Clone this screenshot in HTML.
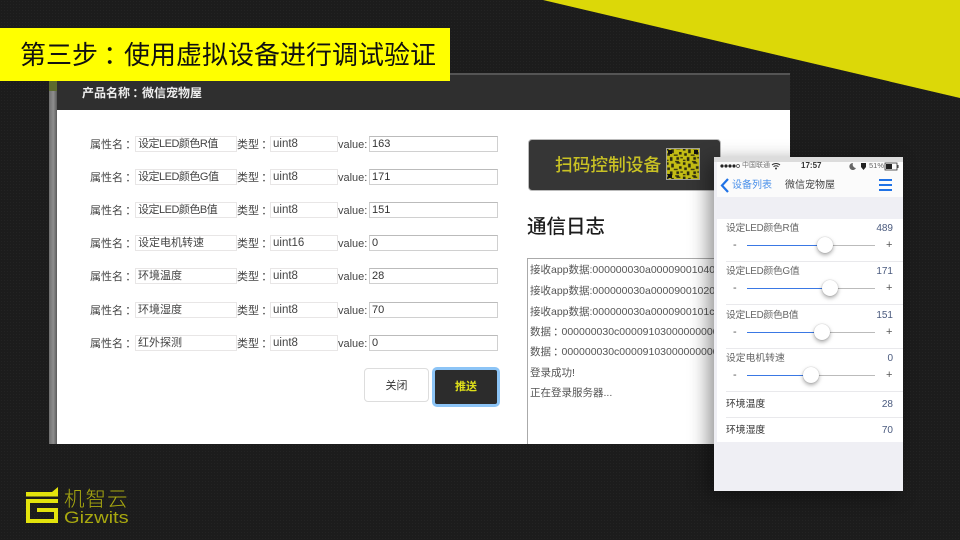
<!DOCTYPE html>
<html lang="zh">
<head>
<meta charset="utf-8">
<title>第三步&#xFF1A;使用虚拟设备进行调试验证</title>
<style>
html,body{margin:0;padding:0;}
body{width:960px;height:540px;overflow:hidden;position:relative;background:#1c1c1c;font-family:"Liberation Sans","Noto Sans CJK SC",sans-serif;}
.a{position:absolute;white-space:nowrap;}
.c{font-family:"Noto Sans CJK TC",sans-serif;line-height:1;position:relative;left:.2em;}
#bgtex{left:0;top:0;width:960px;height:540px;background-image:radial-gradient(#232323 0.6px,transparent 0.7px);background-size:3px 3px;}
#tri{left:0;top:0;}
#bar{left:0;top:28px;width:450px;height:53px;background:#ffff00;color:#111;font-size:26px;line-height:53px;z-index:5;}
#bar span.t{position:absolute;left:20px;top:1px;}
#edge{left:49px;top:81px;width:8px;height:363px;background:linear-gradient(90deg,#6f6f6f,#8e8e8e 55%,#5a5a5a);}
#moss{left:49px;top:81px;width:8px;height:10px;background:#5d6b2e;}
#head{left:57px;top:73px;width:733px;height:37px;background:#2f2f2f;border-top:2px solid #555;box-sizing:border-box;}
#title{left:82px;top:85px;font-size:12px;line-height:17px;font-weight:bold;color:#eee;}
#body{left:57px;top:110px;width:733px;height:334px;background:#fff;}
.l{font-size:11px;line-height:16px;color:#444;margin-top:1px;}
.i{box-sizing:border-box;height:16px;border:1px solid #e8e6e6;background:#fff;font-size:11px;line-height:15px;color:#444;padding-left:2px;}
.n{letter-spacing:-.5px;}
.u{font-size:11.5px;padding-left:2px;}
.v{border-color:#d0d0d0;border-top-color:#bbb;color:#333;font-size:11px;padding-left:2px;}
#close{left:364px;top:368px;width:65px;height:34px;box-sizing:border-box;border:1px solid #ddd;border-radius:4px;background:#fff;color:#333;font-size:11px;line-height:35px;text-align:center;}
#push{left:432px;top:367px;width:68px;height:40px;box-sizing:border-box;border:3px solid #8cc4f6;border-radius:5px;background:#2c2c2c;color:#dfe01a;font-size:11px;font-weight:bold;line-height:34px;text-align:center;}
#scan{left:528px;top:139px;width:193px;height:52px;box-sizing:border-box;border:1px solid #bbb;border-radius:4px;background:#363636;}
#scantxt{left:555px;top:152px;font-size:17.7px;line-height:26px;color:#c9c224;font-weight:500;}
#qr{left:666px;top:148px;}
#logt{left:527px;top:214px;font-size:19.5px;line-height:26px;color:#1c1c1c;font-weight:500;}
#logb{left:527px;top:258px;width:200px;height:186px;box-sizing:border-box;border-left:1px solid #aaa;border-top:1px solid #aaa;}
.g{left:530px;font-size:10.5px;line-height:16px;color:#555;}
#shadow{left:714px;top:157px;width:189px;height:334px;box-shadow:-6px 4px 18px rgba(0,0,0,.42);}
#ph{left:714px;top:157px;width:189px;height:334px;background:#efeff4;overflow:hidden;}
#ph .a{z-index:2;}
#top{left:0;top:0;width:189px;height:5px;background:#dcdcdc;}
#nav{left:3px;top:5px;width:186px;height:35px;background:#fbfbfb;}
#w1{left:3px;top:62px;width:186px;height:223px;background:#fff;}
.sep{left:12px;width:177px;height:1px;background:#e9e9ec;}
.pl{left:12px;font-size:9.8px;line-height:14px;color:#666;}
.pl.e{letter-spacing:-.25px;}
.pl.d{color:#333;}
.pv{right:10px;font-size:10px;line-height:14px;color:#4a5a7e;}
.mn,.ps{font-size:11px;line-height:12px;color:#555;}
.mn{left:19px;}.ps{left:172px;}
.tr{left:33px;width:128px;height:1px;background:#bbb;}
.fl{left:33px;height:1.4px;background:#3a78e4;}
.th{width:16px;height:16px;border-radius:50%;background:#fff;box-shadow:0 2px 4px rgba(0,0,0,.35),0 0 1px rgba(0,0,0,.3);}
</style>
</head>
<body>
<div class="a" id="bgtex"></div>
<svg class="a" id="tri" width="960" height="540" viewBox="0 0 960 540"><polygon points="543,0 960,98 960,0" fill="#dcd808"/></svg>

<div class="a" id="edge"></div>
<div class="a" id="moss"></div>
<div class="a" id="head"></div>
<div class="a" id="body"></div>
<div class="a" id="title">产品名称<span class="c">&#xFF1A;</span>微信宠物屋</div>
<div class="a" id="bar"><span class="t">第三步<span class="c">&#xFF1A;</span>使用虚拟设备进行调试验证</span></div>

<div class="a l" style="left:90px;top:136px">属性名<span class="c">&#xFF1A;</span></div><div class="a i n" style="left:135px;top:136px;width:102px">设定LED颜色R值</div><div class="a l" style="left:237px;top:136px">类型<span class="c">&#xFF1A;</span></div><div class="a i u" style="left:270px;top:136px;width:68px">uint8</div><div class="a l" style="left:338px;top:136px">value:</div><div class="a i v" style="left:369px;top:136px;width:129px">163</div>
<div class="a l" style="left:90px;top:169px">属性名<span class="c">&#xFF1A;</span></div><div class="a i n" style="left:135px;top:169px;width:102px">设定LED颜色G值</div><div class="a l" style="left:237px;top:169px">类型<span class="c">&#xFF1A;</span></div><div class="a i u" style="left:270px;top:169px;width:68px">uint8</div><div class="a l" style="left:338px;top:169px">value:</div><div class="a i v" style="left:369px;top:169px;width:129px">171</div>
<div class="a l" style="left:90px;top:202px">属性名<span class="c">&#xFF1A;</span></div><div class="a i n" style="left:135px;top:202px;width:102px">设定LED颜色B值</div><div class="a l" style="left:237px;top:202px">类型<span class="c">&#xFF1A;</span></div><div class="a i u" style="left:270px;top:202px;width:68px">uint8</div><div class="a l" style="left:338px;top:202px">value:</div><div class="a i v" style="left:369px;top:202px;width:129px">151</div>
<div class="a l" style="left:90px;top:235px">属性名<span class="c">&#xFF1A;</span></div><div class="a i" style="left:135px;top:235px;width:102px">设定电机转速</div><div class="a l" style="left:237px;top:235px">类型<span class="c">&#xFF1A;</span></div><div class="a i u" style="left:270px;top:235px;width:68px">uint16</div><div class="a l" style="left:338px;top:235px">value:</div><div class="a i v" style="left:369px;top:235px;width:129px">0</div>
<div class="a l" style="left:90px;top:268px">属性名<span class="c">&#xFF1A;</span></div><div class="a i" style="left:135px;top:268px;width:102px">环境温度</div><div class="a l" style="left:237px;top:268px">类型<span class="c">&#xFF1A;</span></div><div class="a i u" style="left:270px;top:268px;width:68px">uint8</div><div class="a l" style="left:338px;top:268px">value:</div><div class="a i v" style="left:369px;top:268px;width:129px">28</div>
<div class="a l" style="left:90px;top:302px">属性名<span class="c">&#xFF1A;</span></div><div class="a i" style="left:135px;top:302px;width:102px">环境湿度</div><div class="a l" style="left:237px;top:302px">类型<span class="c">&#xFF1A;</span></div><div class="a i u" style="left:270px;top:302px;width:68px">uint8</div><div class="a l" style="left:338px;top:302px">value:</div><div class="a i v" style="left:369px;top:302px;width:129px">70</div>
<div class="a l" style="left:90px;top:335px">属性名<span class="c">&#xFF1A;</span></div><div class="a i" style="left:135px;top:335px;width:102px">红外探测</div><div class="a l" style="left:237px;top:335px">类型<span class="c">&#xFF1A;</span></div><div class="a i u" style="left:270px;top:335px;width:68px">uint8</div><div class="a l" style="left:338px;top:335px">value:</div><div class="a i v" style="left:369px;top:335px;width:129px">0</div>

<div class="a" id="close">关闭</div>
<div class="a" id="push">推送</div>

<div class="a" id="scan"></div>
<div class="a" id="scantxt">扫码控制设备</div>
<svg class="a" id="qr" width="34" height="32" viewBox="0 0 34 32">
  <defs><pattern id="q" width="13" height="11" patternUnits="userSpaceOnUse" patternTransform="scale(1.3)"><rect width="13" height="11" fill="#c4bd14"/><path d="M0 0h2v2H0zM4 1h2v3H4zM8 0h3v1H8zM10 3h2v2h-2zM1 4h2v2H1zM6 5h3v1H6zM3 7h2v3H3zM8 7h2v2H8zM11 7h2v1h-2zM0 9h2v1H0zM7 10h3v1H7z" fill="#2a2a12"/></pattern></defs>
  <rect width="34" height="32" fill="#a4a49a"/><rect x="1" y="1" width="32" height="30" fill="url(#q)"/>
  <path d="M2 2h4v4H2zM28 2h4v4h-4zM2 26h4v4H2z" fill="#111"/>
</svg>

<div class="a" id="logt">通信日志</div>
<div class="a" id="logb"></div>
<div class="a g" style="top:262px">接收app数据:000000030a00009001040</div>
<div class="a g" style="top:283px">接收app数据:000000030a00009001020</div>
<div class="a g" style="top:304px">接收app数据:000000030a0000900101c</div>
<div class="a g" style="top:324px">数据<span class="c">&#xFF1A;</span>000000030c00009103000000000</div>
<div class="a g" style="top:344px">数据<span class="c">&#xFF1A;</span>000000030c00009103000000000</div>
<div class="a g" style="top:365px">登录成功!</div>
<div class="a g" style="top:385px">正在登录服务器...</div>

<div class="a" id="shadow"></div>
<div class="a" id="ph">
  <div class="a" id="top"></div>
  <div class="a" id="nav"></div>
  <div class="a" id="w1"></div>
  <svg class="a" style="left:0;top:0" width="189" height="42" viewBox="0 0 189 42">
    <circle cx="8" cy="9" r="1.6" fill="#222"/><circle cx="12" cy="9" r="1.6" fill="#222"/><circle cx="16" cy="9" r="1.6" fill="#222"/><circle cx="20" cy="9" r="1.6" fill="#222"/><circle cx="24" cy="9" r="1.5" fill="none" stroke="#444" stroke-width=".7"/>
    <path d="M58 8a6 6 0 0 1 8 0M59.500 9.800a3.500 3.500 0 0 1 5 0" fill="none" stroke="#333" stroke-width="1"/><circle cx="62" cy="11.500" r="1" fill="#333"/>
    <path d="M139 6a3.500 3.500 0 1 0 3 5a3.500 3.500 0 0 1-3-5z" fill="#666"/>
    <path d="M147 6h5v4l-2.500 3l-2.500-3z" fill="#222"/>
    <rect x="171" y="6" width="12" height="7" fill="none" stroke="#333" stroke-width=".8"/><rect x="172" y="7" width="6" height="5" fill="#222"/><rect x="183.500" y="8" width="1" height="3" fill="#333"/>
    <path d="M14 22l-6 6.500l6 6.500" fill="none" stroke="#1f72e6" stroke-width="2.200"/>
    <path d="M165 23h13M165 28h13M165 33h13" stroke="#1f72e6" stroke-width="2" fill="none"/>
  </svg>
  <div class="a" style="left:28px;top:3px;font-size:7px;line-height:12px;color:#777">中国联通</div>
  <div class="a" style="left:87px;top:3px;font-size:8px;line-height:12px;font-weight:bold;color:#333">17:57</div>
  <div class="a" style="left:155px;top:3px;font-size:7.500px;line-height:12px;color:#666">51%</div>
  <div class="a" style="left:18px;top:21px;font-size:10px;line-height:16px;color:#4a90ea">设备列表</div>
  <div class="a" style="left:71px;top:21px;font-size:10px;line-height:16px;color:#444">微信宠物屋</div>

  <div class="a pl e" style="top:65px">设定LED颜色R值</div><div class="a pv" style="top:65px">489</div>
  <div class="a mn" style="top:82px">-</div><div class="a ps" style="top:82px">+</div>
  <div class="a tr" style="top:88px"></div><div class="a fl" style="top:88px;width:78px"></div><div class="a th" style="left:103px;top:80px"></div>
  <div class="a sep" style="top:104px"></div>

  <div class="a pl e" style="top:108px">设定LED颜色G值</div><div class="a pv" style="top:108px">171</div>
  <div class="a mn" style="top:125px">-</div><div class="a ps" style="top:125px">+</div>
  <div class="a tr" style="top:131px"></div><div class="a fl" style="top:131px;width:83px"></div><div class="a th" style="left:108px;top:123px"></div>
  <div class="a sep" style="top:147px"></div>

  <div class="a pl e" style="top:152px">设定LED颜色B值</div><div class="a pv" style="top:152px">151</div>
  <div class="a mn" style="top:169px">-</div><div class="a ps" style="top:169px">+</div>
  <div class="a tr" style="top:175px"></div><div class="a fl" style="top:175px;width:75px"></div><div class="a th" style="left:100px;top:167px"></div>
  <div class="a sep" style="top:191px"></div>

  <div class="a pl" style="top:195px">设定电机转速</div><div class="a pv" style="top:195px">0</div>
  <div class="a mn" style="top:212px">-</div><div class="a ps" style="top:212px">+</div>
  <div class="a tr" style="top:218px"></div><div class="a fl" style="top:218px;width:64px"></div><div class="a th" style="left:89px;top:210px"></div>
  <div class="a sep" style="top:234px"></div>

  <div class="a pl d" style="top:241px">环境温度</div><div class="a pv" style="top:241px">28</div>
  <div class="a sep" style="top:260px"></div>
  <div class="a pl d" style="top:267px">环境湿度</div><div class="a pv" style="top:267px">70</div>
</div>

<svg class="a" style="left:26px;top:486px" width="34" height="40" viewBox="0 0 34 40">
  <path d="M0 6h26l6-5v9.500H0z" fill="#e3e30c"/>
  <path d="M32 15H2v20h28V24H11" fill="none" stroke="#e3e30c" stroke-width="4"/>
</svg>
<div class="a" style="left:64px;top:488px;font-size:20.500px;line-height:24px;color:#a8a80f;letter-spacing:1px;font-weight:300">机智云</div>
<div class="a" style="left:64px;top:509px;font-size:17px;line-height:18px;color:#a8a80f;transform:scaleX(1.18);transform-origin:left center">Gizwits</div>
</body>
</html>
